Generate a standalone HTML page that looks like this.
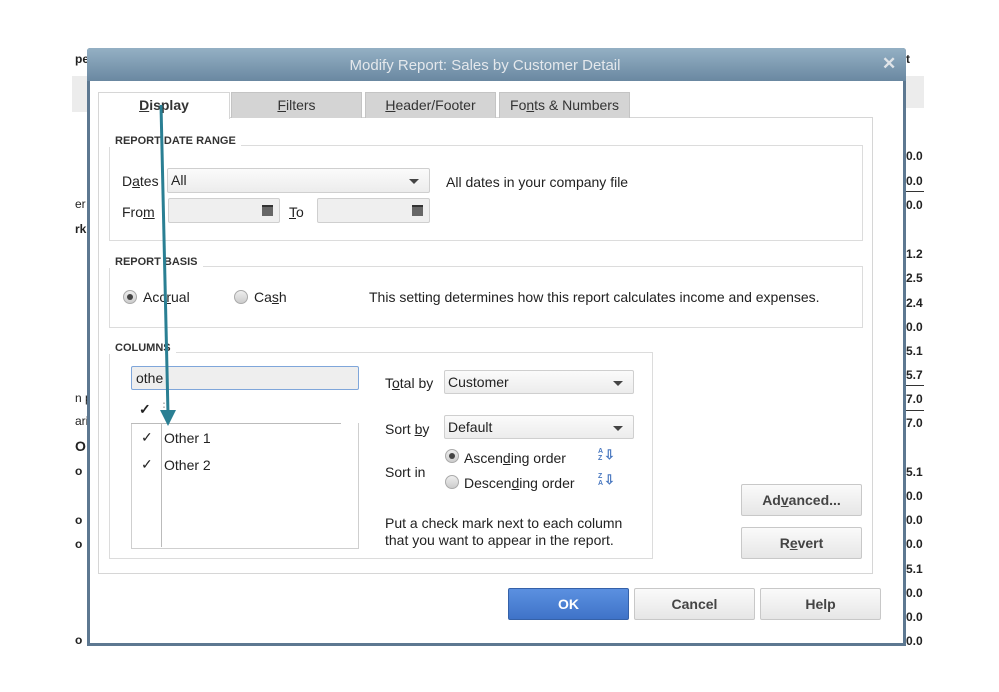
<!DOCTYPE html>
<html><head><meta charset="utf-8"><style>
*{box-sizing:border-box;margin:0;padding:0}
body{width:999px;height:692px;background:#fff;position:relative;overflow:hidden;font-family:"Liberation Sans",Arial,sans-serif;font-size:14px;color:#222}
.a{position:absolute}
.bgrow{position:absolute;height:1px;background:#e8e8e8}
.bt{position:absolute;font-size:12px;font-weight:bold;color:#222}
.grp{position:absolute;border:1px solid #dcdcdc;background:#fff}
.gl{position:absolute;font-size:11px;font-weight:bold;background:#fff;padding:0 5px 0 6px;color:#333}
.combo{position:absolute;border:1px solid #cfcfcf;border-radius:2px;background:linear-gradient(#fbfbfb,#ececec);font-size:14px;padding:3px 0 0 3px}
.combo:after{content:"";position:absolute;right:10px;top:10px;border-left:5px solid transparent;border-right:5px solid transparent;border-top:5px solid #444}
.fld{position:absolute;border:1px solid #cfcfcf;border-radius:2px;background:#efefef}
.cal{position:absolute;right:6px;top:6px;width:11px;height:11px;background:#666;border-top:2px solid #333}
.radio{position:absolute;width:14px;height:14px;border-radius:50%;border:1px solid #aaa;background:linear-gradient(#eee,#ccc)}
.radio.on:after{content:"";position:absolute;left:3px;top:3px;width:6px;height:6px;border-radius:50%;background:#444}
.btn{position:absolute;border:1px solid #c8c8c8;border-radius:2px;background:linear-gradient(#fafafa,#e6e6e6);font-weight:bold;color:#444;text-align:center;font-size:14px}
.tab{position:absolute;top:92px;height:26px;background:#d4d4d4;border:1px solid #c4c4c4;border-bottom:none;text-align:center;font-size:14px;padding-top:4px;color:#333}
u{text-decoration:underline}
</style></head><body>
<!-- background report -->
<div class="a" style="left:72px;top:76px;width:15px;height:36px;background:#ececec"></div>
<div class="a" style="left:906px;top:76px;width:18px;height:32px;background:#ececec"></div>
<div class="bt" style="left:75px;top:52px">pe</div>
<div class="bt" style="left:906px;top:52px">t</div>
<div class="bt" style="left:75px;top:197px;font-weight:normal">er</div>
<div class="bt" style="left:75px;top:222px">rk</div>
<div class="bt" style="left:75px;top:391px;font-weight:normal">n p</div>
<div class="bt" style="left:75px;top:414px;font-weight:normal">ari</div>
<div class="bt" style="left:75px;top:438px;font-size:14px">O</div>
<div class="bt" style="left:75px;top:464px">o</div>
<div class="bt" style="left:75px;top:513px">o</div>
<div class="bt" style="left:75px;top:537px">o</div>
<div class="bt" style="left:75px;top:633px">o</div>
<div class="bt" style="left:906px;top:149px">0.0</div>
<div class="bt" style="left:906px;top:174px">0.0</div>
<div class="a" style="left:906px;top:191px;width:18px;height:1px;background:#333"></div>
<div class="bt" style="left:906px;top:198px">0.0</div>
<div class="bt" style="left:906px;top:247px">1.2</div>
<div class="bt" style="left:906px;top:271px">2.5</div>
<div class="bt" style="left:906px;top:296px">2.4</div>
<div class="bt" style="left:906px;top:320px">0.0</div>
<div class="bt" style="left:906px;top:344px">5.1</div>
<div class="bt" style="left:906px;top:368px">5.7</div>
<div class="a" style="left:906px;top:385px;width:18px;height:1px;background:#333"></div>
<div class="bt" style="left:906px;top:392px">7.0</div>
<div class="a" style="left:906px;top:410px;width:18px;height:1px;background:#333"></div>
<div class="bt" style="left:906px;top:416px">7.0</div>
<div class="bt" style="left:906px;top:465px">5.1</div>
<div class="bt" style="left:906px;top:489px">0.0</div>
<div class="bt" style="left:906px;top:513px">0.0</div>
<div class="bt" style="left:906px;top:537px">0.0</div>
<div class="bt" style="left:906px;top:562px">5.1</div>
<div class="bt" style="left:906px;top:586px">0.0</div>
<div class="bt" style="left:906px;top:610px">0.0</div>
<div class="bt" style="left:906px;top:634px">0.0</div>

<!-- dialog -->
<div class="a" style="left:87px;top:48px;width:819px;height:598px;border:3px solid #5d7891;border-top:none;background:#fff;border-radius:3px 3px 0 0"></div>
<div class="a" style="left:87px;top:48px;width:819px;height:33px;background:linear-gradient(#94b0c4,#6a88a1);border-radius:3px 3px 0 0"></div>
<div class="a" style="left:87px;top:57px;width:796px;text-align:center;color:#e4e8ec;font-size:15px">Modify Report: Sales by Customer Detail</div>
<div class="a" style="left:882px;top:54px;color:#e0e4e8;font-size:17px;font-weight:bold">✕</div>

<!-- tabs -->
<div class="a" style="left:98px;top:117px;width:775px;height:457px;border:1px solid #d6d6d6;background:#fff"></div>
<div class="tab" style="left:98px;width:132px;background:#fff;border-color:#d6d6d6;height:27px;font-weight:bold"><u>D</u>isplay</div>
<div class="tab" style="left:231px;width:131px"><u>F</u>ilters</div>
<div class="tab" style="left:365px;width:131px"><u>H</u>eader/Footer</div>
<div class="tab" style="left:499px;width:131px">Fo<u>n</u>ts &amp; Numbers</div>

<!-- date range -->
<div class="grp" style="left:109px;top:145px;width:754px;height:96px"></div>
<div class="gl" style="left:109px;top:135px">REPORT DATE RANGE</div>
<div class="a" style="left:122px;top:173px">D<u>a</u>tes</div>
<div class="combo" style="left:167px;top:168px;width:263px;height:25px">All</div>
<div class="a" style="left:446px;top:174px">All dates in your company file</div>
<div class="a" style="left:122px;top:204px">Fro<u>m</u></div>
<div class="fld" style="left:168px;top:198px;width:112px;height:25px"><div class="cal"></div></div>
<div class="a" style="left:289px;top:204px"><u>T</u>o</div>
<div class="fld" style="left:317px;top:198px;width:113px;height:25px"><div class="cal"></div></div>

<!-- report basis -->
<div class="grp" style="left:109px;top:266px;width:754px;height:62px"></div>
<div class="gl" style="left:109px;top:256px">REPORT BASIS</div>
<div class="radio on" style="left:123px;top:290px"></div>
<div class="a" style="left:143px;top:289px">Acc<u>r</u>ual</div>
<div class="radio" style="left:234px;top:290px"></div>
<div class="a" style="left:254px;top:289px">Ca<u>s</u>h</div>
<div class="a" style="left:369px;top:289px">This setting determines how this report calculates income and expenses.</div>

<!-- columns -->
<div class="grp" style="left:109px;top:352px;width:544px;height:207px"></div>
<div class="gl" style="left:109px;top:342px">COLUMNS</div>
<div class="a" style="left:131px;top:366px;width:228px;height:24px;border:1px solid #7fa6da;border-radius:2px;background:#eee;padding:3px 4px">othe</div>
<div class="a" style="left:139px;top:401px;font-weight:bold">✓</div>
<div class="a" style="left:158px;top:400px;color:#999;font-size:12px">⋮</div>
<div class="a" style="left:131px;top:423px;width:228px;height:126px;border:1px solid #cfcfcf;border-top:none"></div>
<div class="a" style="left:131px;top:423px;width:210px;height:1px;background:#bbb"></div>
<div class="a" style="left:161px;top:423px;width:1px;height:124px;background:#bbb"></div>
<div class="a" style="left:141px;top:429px">✓</div>
<div class="a" style="left:164px;top:430px">Other 1</div>
<div class="a" style="left:141px;top:456px">✓</div>
<div class="a" style="left:164px;top:457px">Other 2</div>

<div class="a" style="left:385px;top:375px">T<u>o</u>tal by</div>
<div class="combo" style="left:444px;top:370px;width:190px;height:24px">Customer</div>
<div class="a" style="left:385px;top:421px">Sort <u>b</u>y</div>
<div class="combo" style="left:444px;top:415px;width:190px;height:24px">Default</div>
<div class="a" style="left:385px;top:464px">Sort in</div>
<div class="radio on" style="left:445px;top:449px"></div>
<div class="a" style="left:464px;top:450px">Ascen<u>d</u>ing order</div>
<div class="radio" style="left:445px;top:475px"></div>
<div class="a" style="left:464px;top:475px">Descen<u>d</u>ing order</div>
<div class="a" style="left:598px;top:448px;font-size:7px;line-height:7px;color:#4a78c0;font-weight:bold">A<br>Z</div>
<div class="a" style="left:604px;top:447px;color:#4a78c0;font-size:13px;font-weight:bold">⇩</div>
<div class="a" style="left:598px;top:473px;font-size:7px;line-height:7px;color:#4a78c0;font-weight:bold">Z<br>A</div>
<div class="a" style="left:604px;top:472px;color:#4a78c0;font-size:13px;font-weight:bold">⇩</div>
<div class="a" style="left:385px;top:515px;line-height:17px">Put a check mark next to each column<br>that you want to appear in the report.</div>

<div class="btn" style="left:741px;top:484px;width:121px;height:32px;padding-top:7px">Ad<u>v</u>anced...</div>
<div class="btn" style="left:741px;top:527px;width:121px;height:32px;padding-top:7px">R<u>e</u>vert</div>

<div class="btn" style="left:508px;top:588px;width:121px;height:32px;padding-top:7px;background:linear-gradient(#5b90e0,#3f73c8);border-color:#3561a8;color:#fff">OK</div>
<div class="btn" style="left:634px;top:588px;width:121px;height:32px;padding-top:7px">Cancel</div>
<div class="btn" style="left:760px;top:588px;width:121px;height:32px;padding-top:7px">Help</div>

<!-- arrow -->
<svg class="a" style="left:0;top:0" width="999" height="692">
<line x1="161" y1="105" x2="168" y2="414" stroke="#2a7f93" stroke-width="3"/>
<path d="M160 410 L168 426 L176 410 Z" fill="#2a7f93"/>
</svg>
</body></html>
